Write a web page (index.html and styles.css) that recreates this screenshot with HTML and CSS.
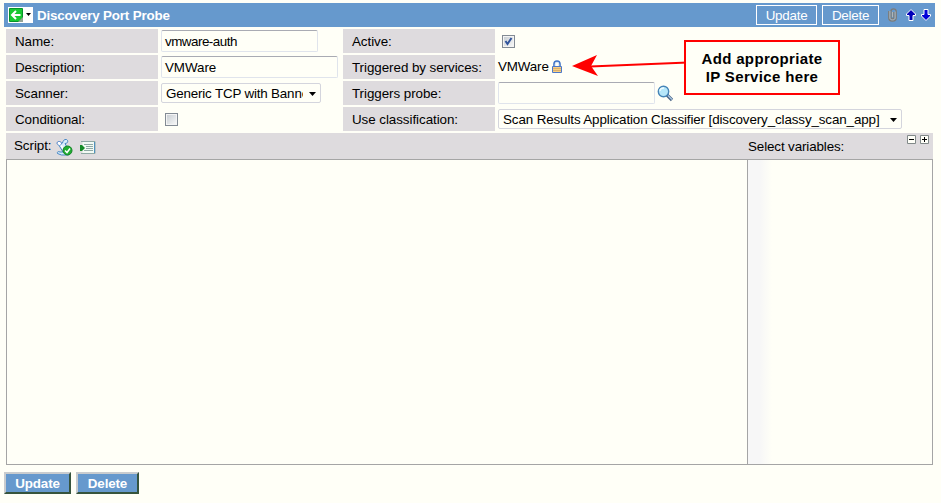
FILE: index.html
```html
<!DOCTYPE html>
<html lang="en">
<head>
<meta charset="utf-8">
<title>Discovery Port Probe</title>
<link rel="stylesheet" href="styles.css">
</head>
<body>
<main class="page">
  <header class="bar">
    <span class="back">
      <svg width="30" height="16" viewBox="0 0 30 16"><path fill="#fff" d="M0 0h25v16H0z"/><path fill="#18c832" stroke="#07912b" d="M1.500 1.500h13v13h-13z"/><path fill="#93a496" d="M15 10v5h-5z"/><path d="M12.500 8H4M8 4L4 8l4 4" fill="none" stroke="#fff" stroke-width="2"/><path d="M18 6h5l-2.500 3z" fill="#000"/></svg>
    </span>
    <h1 class="title">Discovery Port Probe</h1>
    <button class="ghost update">Update</button>
    <button class="ghost delete">Delete</button>
    <svg class="clip" width="9" height="14" viewBox="0 0 9 14" fill="none"><path d="M.8 3v7c0 4 7.400 4 7.400 0V3.500C8.200 0 3 0 3 3.500V9.500c0 2 3 2 3 0V4" stroke="#7d7c78" stroke-width="1.400"/><path stroke="#c2bfb8" stroke-width=".8" d="M1.900 3v7c0 2.500 5.200 2.500 5.200 0V3.500M4.500 4v5"/></svg>
    <svg class="arrows" width="26" height="14" viewBox="0 0 26 14"><path d="M5 1.500L9.500 6v1.500H7v5H3v-5H.5V6z" fill="#0000b8" stroke="#fff"/><path d="M20 12.500L15.500 8V6.500H18v-5h4v5h2.500V8z" fill="#0000d8" stroke="#fff"/></svg>
  </header>

  <section class="form">
    <label class="label">Name:</label>
    <div class="cell"><div class="field name">vmware-auth</div></div>
    <label class="label">Active:</label>
    <div class="cell"><span class="check"><svg width="9" height="9" viewBox="0 0 9 9"><path d="M1.500 4l2 3L7.500 1" fill="none" stroke="#31549c" stroke-width="2"/></svg></span></div>

    <label class="label">Description:</label>
    <div class="cell"><div class="field desc">VMWare</div></div>
    <label class="label">Triggered by services:</label>
    <div class="cell"><span class="service">VMWare</span>
      <svg class="lock" width="10" height="14" viewBox="0 0 10 14"><path d="M2 7V4c0-4 6-4 6 0v3" fill="none" stroke="#3e73c6" stroke-width="1.600"/><path d="M3.200 7V4c0-2 3.600-2 3.600 0v3" fill="none" stroke="#bed5f3" stroke-width=".7"/><path d="M.5 6.500h9v6h-9z" fill="#f9cf80" stroke="#4c78c8"/><path d="M1 8.500h8M1 10.500h8" stroke="#d8af70"/></svg>
    </div>

    <label class="label">Scanner:</label>
    <div class="cell"><div class="field select scanner"><span class="value">Generic TCP with Banner</span><i class="caret"></i></div></div>
    <label class="label">Triggers probe:</label>
    <div class="cell"><div class="field probe"></div>
      <svg class="lens" width="17" height="17" viewBox="0 0 17 17"><path d="M10 10l5 5" stroke="#4b6486" stroke-width="3.200"/><path d="M11 10.500l4 4" stroke="#a9c9e4" stroke-width="1.200"/><circle cx="6.500" cy="6.500" r="5.200" fill="#b6e7fa" stroke="#4785b7" stroke-width="1.400"/><path d="M3 6c0-2 2-3 4-3" fill="none" stroke="#edfcff" stroke-width="1.500"/></svg>
    </div>

    <label class="label">Conditional:</label>
    <div class="cell"><span class="check"></span></div>
    <label class="label">Use classification:</label>
    <div class="cell"><div class="field select classify"><span class="value">Scan Results Application Classifier [discovery_classy_scan_app]</span><i class="caret"></i></div></div>
  </section>

  <section class="script">
    <div class="script-head">
      <span class="script-label">Script:</span>
      <svg class="scroll" width="18" height="17" viewBox="0 0 18 17"><path d="M2.500 5.500L7 13H4c-2-1-3 0-2.500 1.500l4 1.500h7V11L9 4.500c3 0 3.500-3 1.500-4C8 0 7 2 6.500 4z" fill="#d8edfb" stroke="#4685c4"/><path d="M2.500 6C0 5 1 2 3.500 2.500S6 5 4.500 6" fill="#fff" stroke="#4279c5"/><path d="M5 6.500l4 5.500" stroke="#fff" stroke-width="1.500"/><circle cx="11.500" cy="11.500" r="4.500" fill="#20ad32" stroke="#128224"/><path d="M9 11.500l2 2 3-4" fill="none" stroke="#fff" stroke-width="1.500"/></svg>
      <svg class="lines" width="16" height="13" viewBox="0 0 16 13"><path d="M2.500 1h12v11h-12z" fill="#f2faf4"/><path d="M1 .5h14v12H1M4 3.500h9M6 5.500h7M6 7.500h7M4 9.500h9" fill="none" stroke="#8fa9a5"/><path d="M14.500 1v11" stroke="#4f91be"/><path d="M0 4h2l3 3-3 3H0z" fill="#148b27"/></svg>
      <span class="vars-label">Select variables:</span>
      <svg class="toggles" width="22" height="9" viewBox="0 0 22 9"><path d="M.5.5h8v8h-8zM13.500.5h8v8h-8z" fill="#fffff8" stroke="#818989"/><path d="M2 4.500h5M15 4.500h5M17.500 2v5" stroke="#000"/></svg>
    </div>
    <div class="panes"><div class="editor"></div><div class="vars"></div></div>
  </section>

  <footer class="actions"><button class="raised save">Update</button><button class="raised remove">Delete</button></footer>

  <svg class="pointer" width="116" height="24" viewBox="0 0 116 24"><path d="M18 12.500l98-4" stroke="#f00" stroke-width="2"/><path d="M0 12L25 1l-6 11 7 10z" fill="#f00"/></svg>
  <aside class="callout">Add appropriate<br>IP Service here</aside>
</main>
</body>
</html>
```
FILE: styles.css
```css
* { box-sizing: border-box; }
body { margin: 0; background: #fffff7; color: #000; font: 13.4px/16px "Liberation Sans", Arial, sans-serif; letter-spacing: -.06px; overflow: hidden; }
.page { position: relative; width: 941px; height: 503px; padding: 3px 6px 0 4px; }
svg { display: block; flex: none; }
button { font-family: inherit; padding: 0; }

.bar { display: flex; align-items: center; height: 24px; padding: 0 3px 0 4px; background: #6699cd; color: #fff; }
.back { width: 29px; }
.title { margin: 2px auto 0 0; font-size: 13.4px; line-height: 16px; letter-spacing: -.17px; }
.ghost { height: 20px; border: 1px solid #fff; background: transparent; color: #fff; font-size: 13.4px; line-height: 18px; padding-top: 1px; letter-spacing: -.25px; }
.update { width: 61px; margin-right: 5px; }
.delete { width: 57px; }
.clip { margin-left: 9px; }
.arrows { margin: 0 0 0 9px; }

.form { display: grid; grid-template-columns: 152px 185px 152px 1fr; grid-auto-rows: 24px; row-gap: 2px; margin: 2px 0 0 2px; }
.label { padding: 5px 0 0 9px; background: #dedbde; }
.cell { display: flex; align-items: center; padding-left: 3px; }
.service { letter-spacing: -.15px; }
.field { height: 22px; border: 1px solid #e0e4ec; border-top-color: #a9abb3; border-radius: 2px; padding: 3px 3px 0; line-height: 16px; white-space: nowrap; }
.name { width: 157px; letter-spacing: -.5px; }
.desc { width: 177px; }
.probe { width: 157px; }
.select { display: flex; justify-content: space-between; height: 20px; padding: 2px 4px 0; border-color: #d4d5dd; letter-spacing: -.12px; }
.scanner { width: 160px; }
.value { overflow: hidden; }
.scanner .value { width: 137px; letter-spacing: -.18px; }
.classify { width: 404px; }
.caret { width: 7px; height: 4px; margin-top: 6px; background: #000; clip-path: polygon(0 0, 100% 0, 50% 100%); }
.check { width: 13px; height: 13px; margin-left: 4px; padding: 1px; border: 1px solid #838b94; background: linear-gradient(135deg, #c5cbd0, #fafafa); box-shadow: inset 0 0 0 1px #f4f4f4; }
.lock { margin-left: 3px; }
.lens { margin-left: 2px; }

.script { width: 927px; margin: 2px 0 0 2px; }
.script-head { display: flex; height: 26px; padding: 5px 4px 0 8px; background: #dedbde; }
.script-label { width: 42px; }
.scroll { margin-top: 1px; }
.lines { margin: 3px 0 0 6px; }
.vars-label { margin: 1px auto 0 652px; letter-spacing: -.12px; }
.toggles { margin-top: -3px; }
.panes { display: grid; grid-template-columns: 741px 1fr; height: 306px; border: 1px solid #a5a5a5; }
.editor { border-right: 1px solid #a5a5a5; }
.vars { background: linear-gradient(90deg, #f7f7f7 12px, #fffff7 24px); }

.actions { display: flex; gap: 5px; margin-top: 7px; }
.raised { height: 22px; border: 2px solid; border-color: #c9ccce #36543d #36543d #c9ccce; background: #6699cd; color: #fff; font-size: 13.4px; font-weight: bold; line-height: 16px; padding-top: 2px; letter-spacing: -.15px; }
.save { width: 67px; }
.remove { width: 63px; }

.pointer { position: absolute; left: 572px; top: 54px; }
.callout { position: absolute; left: 684px; top: 40px; width: 156px; height: 55px; padding-top: 8px; border: 2px solid #f00; background: #fffff7; text-align: center; font-size: 15px; font-weight: bold; line-height: 18px; letter-spacing: .35px; }
```
